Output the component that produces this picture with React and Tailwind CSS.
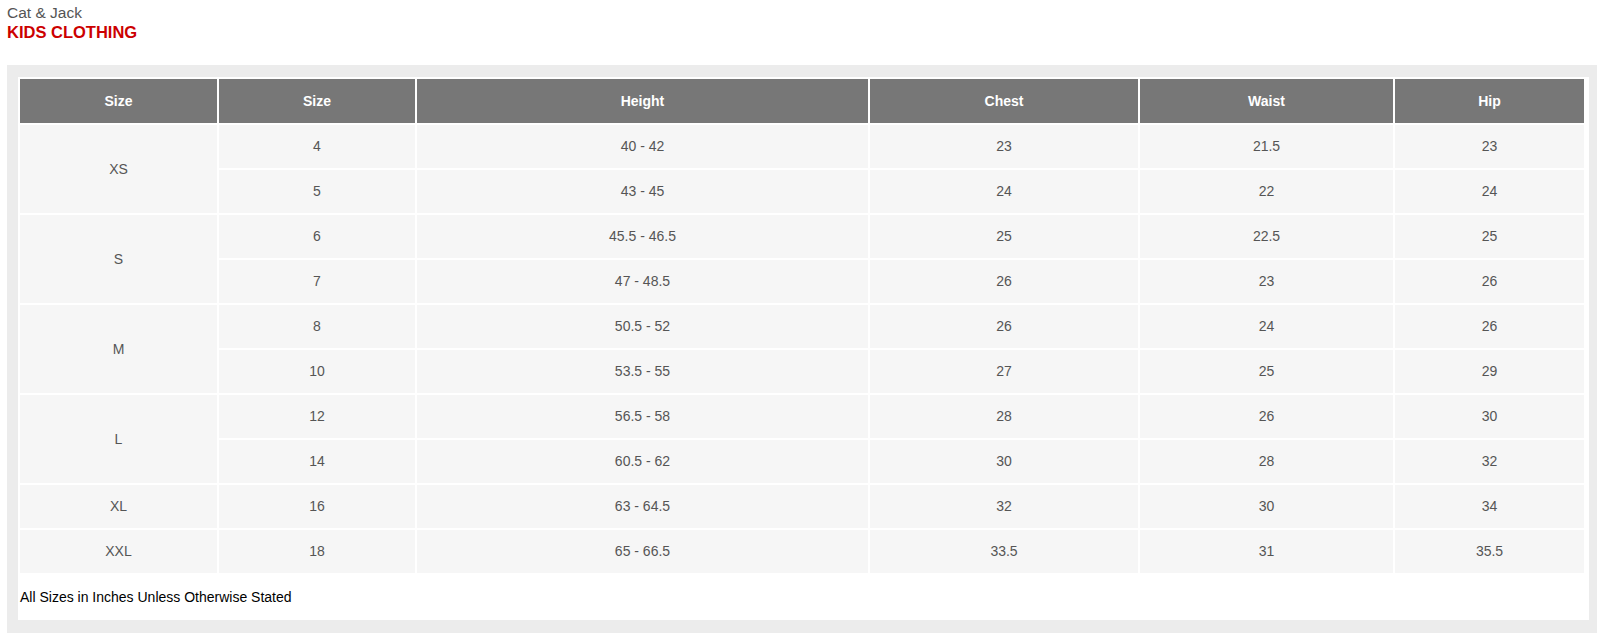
import React from 'react';

const columns = ['Size', 'Size', 'Height', 'Chest', 'Waist', 'Hip'];

const groups = [
  { label: 'XS', rows: [['4', '40 - 42', '23', '21.5', '23'], ['5', '43 - 45', '24', '22', '24']] },
  { label: 'S', rows: [['6', '45.5 - 46.5', '25', '22.5', '25'], ['7', '47 - 48.5', '26', '23', '26']] },
  { label: 'M', rows: [['8', '50.5 - 52', '26', '24', '26'], ['10', '53.5 - 55', '27', '25', '29']] },
  { label: 'L', rows: [['12', '56.5 - 58', '28', '26', '30'], ['14', '60.5 - 62', '30', '28', '32']] },
  { label: 'XL', rows: [['16', '63 - 64.5', '32', '30', '34']] },
  { label: 'XXL', rows: [['18', '65 - 66.5', '33.5', '31', '35.5']] },
];

const widths = ['w-[197px]', 'w-[196px]', 'w-[451px]', 'w-[268px]', 'w-[253px]', 'w-[189px]'];

const cell = 'bg-[#f6f6f6] text-center align-middle h-[43px] p-0 text-[14px] text-[#555]';

const App = () => {
  return (
    <div className="min-h-[634px] bg-white font-['Liberation_Sans',Arial,sans-serif]">
      {/* brand heading */}
      <div className="pl-[7px] pt-[4px]">
        <div className="text-[15.5px] leading-[18px] text-[#555]">Cat &amp; Jack</div>
        <div className="text-[16.5px] leading-[21px] font-bold text-[#cc0000]">KIDS CLOTHING</div>
      </div>

      <div className="mt-[22px] ml-[7px] w-[1590px] bg-[#ececec] pt-[12px] pl-[11px] pr-[8px] pb-[13px]">
        <div className="bg-white">
          <table className="w-[1568px] table-fixed border-separate border-spacing-[2px]">
            <colgroup>
              {widths.map((w, i) => (
                <col key={i} className={w} />
              ))}
            </colgroup>
            <thead>
              <tr>
                {columns.map((c, i) => (
                  <th
                    key={i}
                    className="bg-[#777777] h-[44px] p-0 text-center align-middle text-[14px] font-bold text-white"
                  >
                    {c}
                  </th>
                ))}
              </tr>
            </thead>
            <tbody>
              {groups.map((g) =>
                g.rows.map((r, idx) => (
                  <tr key={g.label + idx}>
                    {idx === 0 && (
                      <td rowSpan={g.rows.length} className={cell}>
                        {g.label}
                      </td>
                    )}
                    {r.map((v, j) => (
                      <td key={j} className={cell}>
                        {v}
                      </td>
                    ))}
                  </tr>
                ))
              )}
            </tbody>
          </table>
          <p className="pl-[2px] pt-[14px] pb-[14px] text-[14px] leading-[17px] text-black">
            All Sizes in Inches Unless Otherwise Stated
          </p>
        </div>
      </div>
    </div>
  );
};

export default App;
